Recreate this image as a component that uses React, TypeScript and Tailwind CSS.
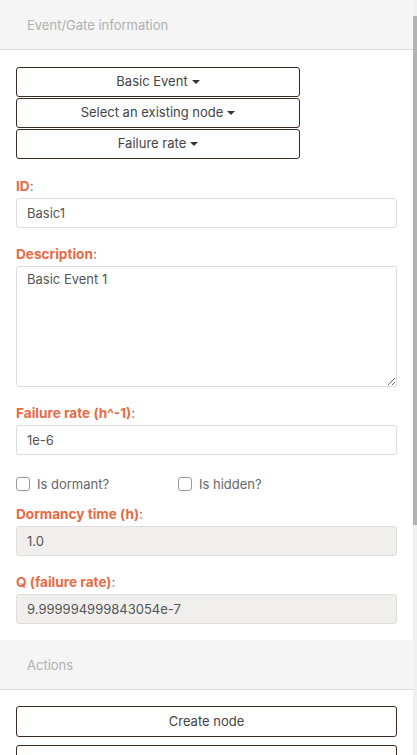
import { ReactNode } from 'react'

const font = { fontFamily: 'Inter, "Open Sans", sans-serif' }

function Caret() {
  return <span className="ml-1 inline-block h-0 w-0 border-x-[4px] border-t-[4px] border-x-transparent border-t-[#333] align-middle" />
}

function DropButton({ children }: { children: ReactNode }) {
  return (
    <button
      type="button"
      className="flex h-[30px] w-[284px] items-center justify-center rounded-[3px] border border-[#3b2a20] bg-white text-[13px] text-[#444]"
    >
      {children}
      <Caret />
    </button>
  )
}

function Label({ children }: { children: ReactNode }) {
  return (
    <div className="mb-[2px] text-[13.6px] leading-[19px]">
      <span className="font-bold text-[#e56c47]">{children}</span>
      <span className="text-[#777]">:</span>
    </div>
  )
}

function Field({ label, value, disabled }: { label: string; value: string; disabled?: boolean }) {
  return (
    <div>
      <Label>{label}</Label>
      <input
        readOnly
        value={value}
        className={
          'block h-[30px] w-full rounded-[3px] border border-[#ddd] px-[10px] text-[13px] text-[#555] outline-none ' +
          (disabled ? 'bg-[#f0efee]' : 'bg-white')
        }
      />
    </div>
  )
}

function SectionHeader({ title }: { title: string }) {
  return (
    <div className="flex h-[50px] items-center border-b border-[#ddd] bg-[#f5f5f5] px-[27px] pt-[3px] text-[13px] text-[#b0b0b0]">
      {title}
    </div>
  )
}

function Check({ label }: { label: string }) {
  return (
    <label className="flex h-[14px] items-center gap-[7px] text-[13px] leading-[14px] text-[#666]">
      <span className="h-[14px] w-[14px] rounded-[3px] border border-[#999] bg-white" />
      {label}
    </label>
  )
}

export default function App() {
  return (
    <div className="flex h-[755px] w-[417px] overflow-hidden bg-white" style={font}>
      <div className="w-[413px] shrink-0">
        <SectionHeader title="Event/Gate information" />
        <div className="px-4 pt-[17px] pb-[16px]">
          <div className="flex flex-col gap-px">
            <DropButton>Basic Event</DropButton>
            <DropButton>Select an existing node</DropButton>
            <DropButton>Failure rate</DropButton>
          </div>

          <div className="mt-[18px] flex flex-col gap-[17px]">
            <Field label="ID" value="Basic1" />
            <div>
              <Label>Description</Label>
              <textarea
                readOnly
                value="Basic Event 1"
                className="block h-[121px] w-full rounded-[3px] border border-[#ddd] px-[10px] py-[3px] text-[13px] text-[#555] outline-none"
              />
            </div>
            <Field label="Failure rate (h^-1)" value="1e-6" />
          </div>

          <div className="mt-[22px] flex">
            <div className="w-[162px]">
              <Check label="Is dormant?" />
            </div>
            <Check label="Is hidden?" />
          </div>

          <div className="mt-[14px] flex flex-col gap-[17px]">
            <Field label="Dormancy time (h)" value="1.0" disabled />
            <Field label="Q (failure rate)" value="9.999994999843054e-7" disabled />
          </div>
        </div>

        <SectionHeader title="Actions" />
        <div className="flex flex-col gap-[8px] px-4 pt-[16px]">
          <button
            type="button"
            className="h-[31px] w-full rounded-[3px] border border-[#3b2a20] bg-white text-[13px] text-[#444]"
          >
            Create node
          </button>
          <button
            type="button"
            aria-label="Delete node"
            className="h-[31px] w-full rounded-[3px] border border-[#3b2a20] bg-white"
          />
        </div>
      </div>
      <div className="w-[4px] bg-[#efefef] pt-[16px]">
        <div className="h-[509px] w-full bg-[#b3b3b3]" />
      </div>
    </div>
  )
}
